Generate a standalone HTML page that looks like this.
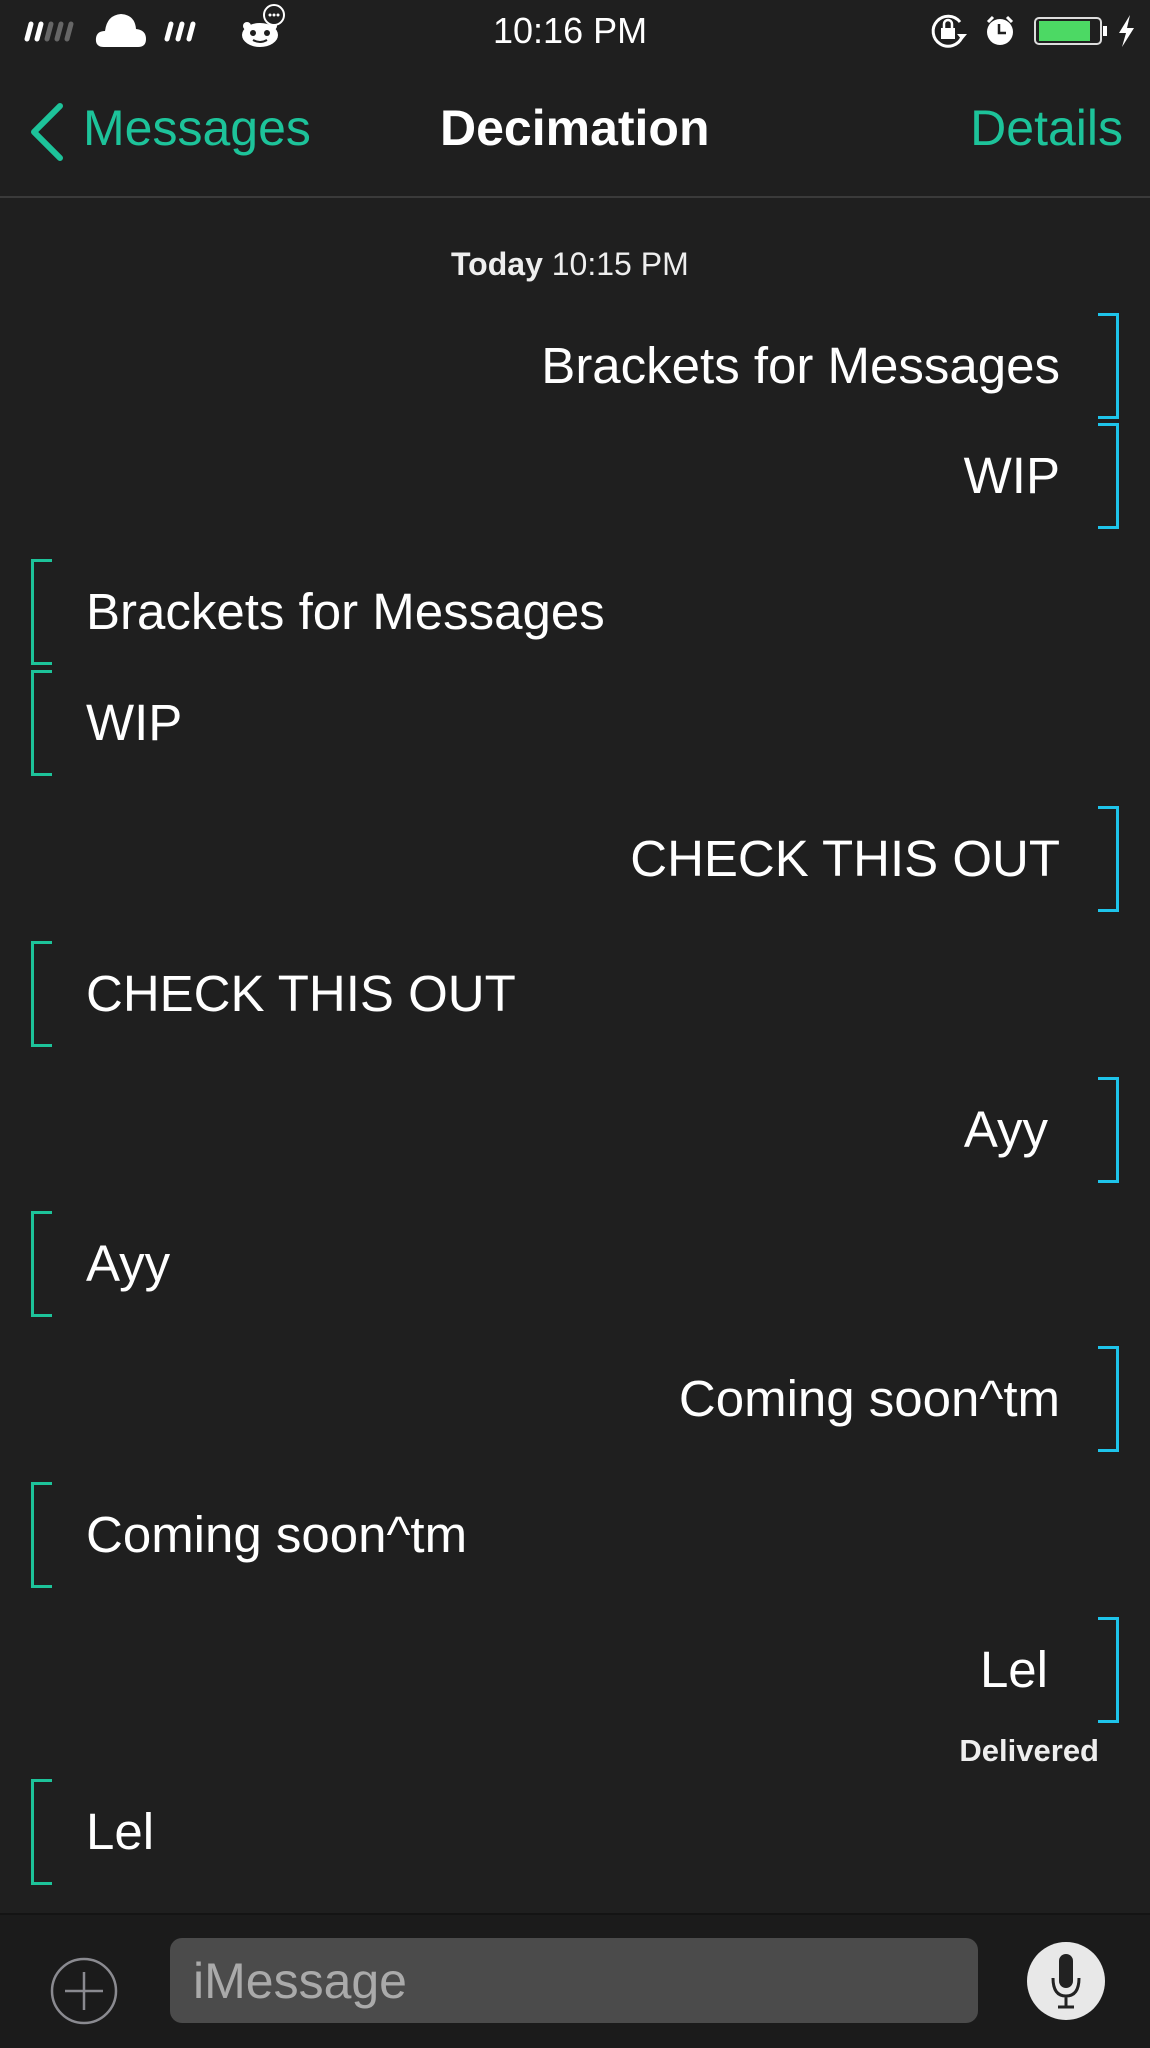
<!DOCTYPE html>
<html><head><meta charset="utf-8"><style>
*{margin:0;padding:0;box-sizing:border-box}
body{width:1150px;height:2048px;background:#1f1f1f;position:relative;overflow:hidden;font-family:"Liberation Sans",Arial,sans-serif;color:#fff}
.a{position:absolute;white-space:nowrap}
.msg{position:absolute;height:106px;line-height:106px;font-size:51px;letter-spacing:0px}
.r{right:90px}
.l{left:86px}
.br{position:absolute;width:21px;height:106px;border:3px solid #1ec4ea;border-left:none;left:1098px}
.bl{position:absolute;width:21px;height:106px;border:3px solid #1dc39a;border-right:none;left:31px}
</style></head><body>
<svg class="a" style="left:0;top:0" width="1150" height="60">
<g stroke-width="5" stroke-linecap="round">
<line x1="27" y1="39" x2="31" y2="24" stroke="#fff"/>
<line x1="37" y1="39" x2="41" y2="24" stroke="#fff"/>
<line x1="47" y1="39" x2="51" y2="24" stroke="#666"/>
<line x1="57" y1="39" x2="61" y2="24" stroke="#666"/>
<line x1="67" y1="39" x2="71" y2="24" stroke="#666"/>
<line x1="167" y1="39" x2="171" y2="24" stroke="#fff"/>
<line x1="178" y1="39" x2="182" y2="24" stroke="#fff"/>
<line x1="189" y1="39" x2="193" y2="24" stroke="#fff"/>
</g>
<path d="M104 47 Q95 47 96 38 Q97 31 105 31 Q107 15 121 14 Q135 15 136 29 Q146 30 146 39 Q146 47 138 47 Z" fill="#fff"/>
<ellipse cx="260" cy="35" rx="18" ry="12" fill="#fff"/>
<circle cx="247" cy="26" r="4" fill="#fff"/><circle cx="273" cy="26" r="4" fill="#fff"/>
<circle cx="253" cy="33" r="3" fill="#1f1f1f"/><circle cx="267" cy="33" r="3" fill="#1f1f1f"/>
<path d="M253 40 Q260 44 267 40" stroke="#1f1f1f" stroke-width="2" fill="none"/>
<circle cx="274" cy="15" r="10" fill="#1f1f1f" stroke="#fff" stroke-width="2"/>
<circle cx="270" cy="15" r="1.5" fill="#fff"/><circle cx="274" cy="15" r="1.5" fill="#fff"/><circle cx="278" cy="15" r="1.5" fill="#fff"/>
<path d="M960 22 A15 15 0 1 0 962 37" stroke="#fff" stroke-width="3" fill="none"/>
<path d="M957 34 L967 34 L962 40 Z" fill="#fff"/>
<rect x="941" y="28" width="14" height="11" fill="#fff"/>
<path d="M944 29 V24 A4 4 0 0 1 952 24 V29" stroke="#fff" stroke-width="2.5" fill="none"/>
<circle cx="1000" cy="32" r="13" fill="#fff"/>
<path d="M988 22 L993 17 M1012 22 L1007 17" stroke="#fff" stroke-width="3"/>
<path d="M999 24 V33 H1006" stroke="#1f1f1f" stroke-width="2.5" fill="none"/>
<rect x="1035" y="18" width="66" height="26" rx="4" fill="none" stroke="#ddd" stroke-width="2"/>
<rect x="1039" y="21" width="51" height="20" fill="#4cd964"/>
<rect x="1103" y="26" width="4" height="10" fill="#fff"/>
<path d="M1130 15 L1119 33 L1126 33 L1122 47 L1134 28 L1127 28 Z" fill="#fff"/>
</svg>
<div class="a" style="left:493px;top:11px;font-size:36px;line-height:40px">10:16 PM</div>
<svg class="a" style="left:24px;top:102px" width="44" height="60"><path d="M36 4 L10 30 L36 56" stroke="#1dc39a" stroke-width="6" fill="none" stroke-linecap="round" stroke-linejoin="round"/></svg>
<div class="a" style="left:83px;top:99px;font-size:50px;line-height:58px;color:#1dc39a">Messages</div>
<div class="a" style="left:440px;top:99px;font-size:50px;line-height:58px;font-weight:bold">Decimation</div>
<div class="a" style="right:27px;top:99px;font-size:50px;line-height:58px;color:#1dc39a">Details</div>
<div class="a" style="left:0;top:196px;width:1150px;height:2px;background:#3a3a3a"></div>
<div class="a" style="left:451px;top:246px;font-size:32px;line-height:36px;color:#eee"><b>Today</b> 10:15 PM</div>
<div class="br" style="top:313px"></div><div class="msg r" style="top:313px">Brackets for Messages</div>
<div class="br" style="top:423px"></div><div class="msg r" style="top:423px">WIP</div>
<div class="bl" style="top:559px"></div><div class="msg l" style="top:559px">Brackets for Messages</div>
<div class="bl" style="top:670px"></div><div class="msg l" style="top:670px">WIP</div>
<div class="br" style="top:806px"></div><div class="msg r" style="top:806px">CHECK THIS OUT</div>
<div class="bl" style="top:941px"></div><div class="msg l" style="top:941px">CHECK THIS OUT</div>
<div class="br" style="top:1077px"></div><div class="msg r" style="top:1077px;right:102px">Ayy</div>
<div class="bl" style="top:1211px"></div><div class="msg l" style="top:1211px">Ayy</div>
<div class="br" style="top:1346px"></div><div class="msg r" style="top:1346px">Coming soon^tm</div>
<div class="bl" style="top:1482px"></div><div class="msg l" style="top:1482px">Coming soon^tm</div>
<div class="br" style="top:1617px"></div><div class="msg r" style="top:1617px;right:102px">Lel</div>
<div class="a" style="right:51px;top:1734px;font-size:31px;line-height:34px;font-weight:bold;color:#eee">Delivered</div>
<div class="bl" style="top:1779px"></div><div class="msg l" style="top:1779px">Lel</div>
<div class="a" style="left:0;top:1913px;width:1150px;height:135px;background:#1b1b1b;border-top:2px solid #141414"></div>
<svg class="a" style="left:48px;top:1955px" width="72" height="72"><circle cx="36" cy="36" r="32" fill="none" stroke="#8a8a90" stroke-width="2.5"/><path d="M36 17 V55 M17 36 H55" stroke="#8a8a90" stroke-width="2.5"/></svg>
<div class="a" style="left:170px;top:1938px;width:808px;height:85px;background:#4b4b4b;border-radius:12px"></div>
<div class="a" style="left:193px;top:1952px;font-size:50px;line-height:58px;color:#aaa">iMessage</div>
<svg class="a" style="left:1025px;top:1940px" width="82" height="82"><circle cx="41" cy="41" r="39" fill="#e8e8e8"/><rect x="34" y="14" width="14" height="34" rx="7" fill="#222"/><path d="M28 38 Q28 56 41 56 Q54 56 54 38 M41 56 V67 M33 67 H49" stroke="#222" stroke-width="3" fill="none"/></svg>
</body></html>
